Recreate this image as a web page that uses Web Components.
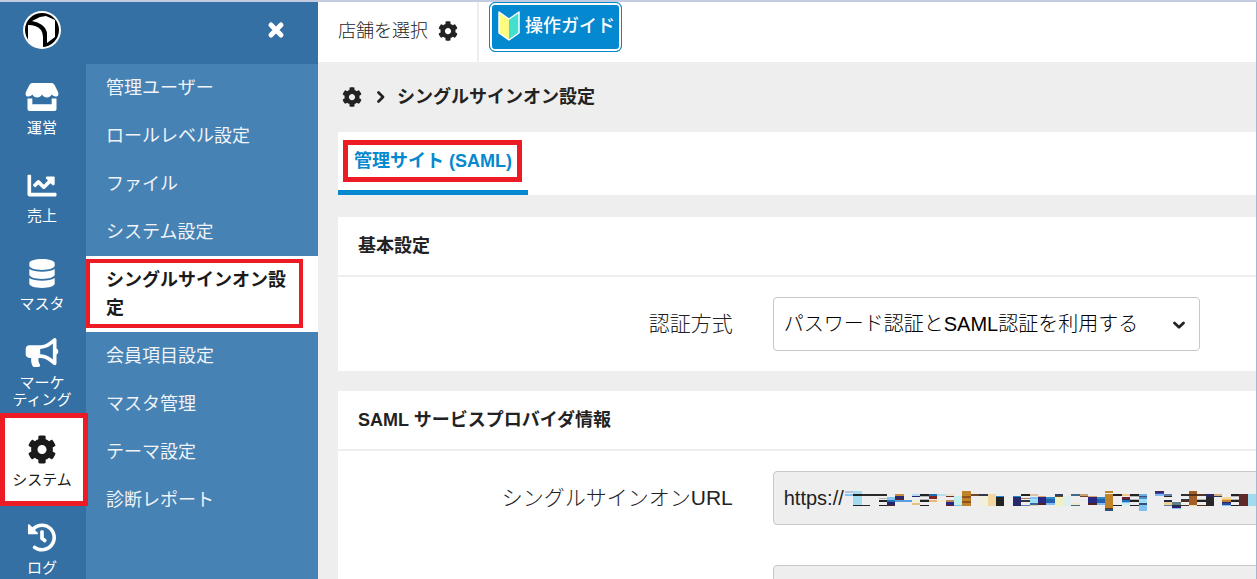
<!DOCTYPE html>
<html lang="ja">
<head>
<meta charset="utf-8">
<title>シングルサインオン設定</title>
<style>
  html, body {
    margin: 0;
    height: 100%;
    overflow: hidden;
  }
  body {
    font-family: "Liberation Sans", "Noto Sans CJK JP", sans-serif;
    font-size: 18px;
    line-height: 28px;
    color: #222;
    --blue: #0488cf;
    --red: #ed1c24;
    --grey: #eee;
  }
</style>
</head>
<body>
<admin-app>
  <side-bar slot="side">
    <rail-item slot="rail" icon="store" label="運営"></rail-item>
    <rail-item slot="rail" icon="chart" label="売上"></rail-item>
    <rail-item slot="rail" icon="database" label="マスタ"></rail-item>
    <rail-item slot="rail" icon="bullhorn" label="マーケ ティング"></rail-item>
    <rail-item slot="rail" icon="cog" label="システム" active></rail-item>
    <rail-item slot="rail" icon="history" label="ログ"></rail-item>

    <menu-item>管理ユーザー</menu-item>
    <menu-item>ロールレベル設定</menu-item>
    <menu-item>ファイル</menu-item>
    <menu-item>システム設定</menu-item>
    <menu-item active>シングルサインオン設定</menu-item>
    <menu-item>会員項目設定</menu-item>
    <menu-item>マスタ管理</menu-item>
    <menu-item>テーマ設定</menu-item>
    <menu-item>診断レポート</menu-item>
  </side-bar>

  <top-bar slot="top"></top-bar>
  <page-crumb>シングルサインオン設定</page-crumb>
  <tab-bar>管理サイト (SAML)</tab-bar>

  <setting-panel heading="基本設定">
    <select-field label="認証方式" value="パスワード認証とSAML認証を利用する"></select-field>
  </setting-panel>
  <setting-panel heading="SAML サービスプロバイダ情報">
    <text-field label="シングルサインオンURL" value="https://" masked></text-field>
    <text-field></text-field>
  </setting-panel>
</admin-app>

<script>
const icons = {
  store: ['0 0 34 30', '<path d="M7 0h20q2 0 3 2l3 6q1 2 1 3c0 2-1 3-3 3-2 0-3-1-4-2-1 2-3 3-5 3s-4-1-5-3c-1 2-3 3-5 3s-4-1-5-3c-1 1-2 2-4 2s-3-1-3-3q0-1 1-3l3-6q1-2 3-2z"/><path d="M2 16h5v6h20v-6h5v11q0 2-2 2H4q-2 0-2-2z"/>'],
  chart: ['0 0 512 512', '<path d="M496 384H64V80c0-8.84-7.16-16-16-16H16C7.16 64 0 71.16 0 80v336c0 17.67 14.33 32 32 32h464c8.84 0 16-7.16 16-16v-32c0-8.84-7.16-16-16-16zM464 96H345.94c-21.38 0-32.09 25.85-16.97 40.97l32.4 32.4L288 242.75l-73.37-73.37c-12.5-12.5-32.76-12.5-45.25 0l-68.69 68.69c-6.25 6.25-6.25 16.38 0 22.63l22.62 22.62c6.25 6.25 16.38 6.25 22.63 0L192 237.25l73.37 73.37c12.5 12.5 32.76 12.5 45.25 0l96-96 32.4 32.4c15.12 15.12 40.97 4.41 40.97-16.97V112c.01-8.84-7.15-16-15.99-16z"/>'],
  database: ['-32 0 512 512', '<path d="M448 73.143v45.714C448 159.143 347.667 192 224 192S0 159.143 0 118.857V73.143C0 32.857 100.333 0 224 0s224 32.857 224 73.143zM448 176v102.857C448 319.143 347.667 352 224 352S0 319.143 0 278.857V176c48.125 33.143 136.208 48.572 224 48.572S399.874 209.143 448 176zm0 160v102.857C448 479.143 347.667 512 224 512S0 479.143 0 438.857V336c48.125 33.143 136.208 48.572 224 48.572S399.874 369.143 448 336z"/>'],
  bullhorn: ['0 0 576 512', '<path d="M576 240c0-23.63-12.95-44.04-32-55.12V32.01C544 23.26 537.02 0 512 0c-7.12 0-14.19 2.38-19.98 7.02l-85.03 68.03C364.28 109.19 310.66 128 256 128H64c-35.35 0-64 28.65-64 64v96c0 35.35 28.65 64 64 64h33.7c-1.39 10.48-2.18 21.14-2.18 32 0 39.77 9.26 77.35 25.56 110.94 5.19 10.69 16.52 17.06 28.4 17.06h74.28c26.05 0 41.69-29.84 25.9-50.56-16.4-21.52-26.15-48.36-26.15-77.44 0-11.11 1.62-21.79 4.41-32H256c54.66 0 108.28 18.81 150.98 52.95l85.03 68.03a32.023 32.023 0 0 0 19.98 7.02c24.92 0 32-22.78 32-32V295.13C563.05 284.04 576 263.63 576 240zm-96 141.42l-33.05-26.44C392.95 311.78 325.12 288 256 288v-96c69.12 0 136.95-23.78 190.95-66.98L480 98.58v282.84z"/>'],
  cog: ['0 0 512 512', '<path d="M487.4 315.7l-42.6-24.6c4.3-23.2 4.3-47 0-70.2l42.6-24.6c4.9-2.8 7.1-8.6 5.5-14-11.1-35.6-30-67.8-54.7-94.6-3.8-4.1-10-5.1-14.8-2.3L380.8 110c-17.9-15.4-38.5-27.3-60.8-35.1V25.8c0-5.6-3.9-10.5-9.4-11.7-36.7-8.2-74.3-7.8-109.2 0-5.5 1.2-9.4 6.1-9.4 11.7V75c-22.2 7.9-42.8 19.8-60.8 35.1L88.7 85.5c-4.9-2.8-11-1.9-14.8 2.3-24.7 26.7-43.6 58.9-54.7 94.6-1.7 5.4.6 11.2 5.5 14L67.3 221c-4.3 23.2-4.3 47 0 70.2l-42.6 24.6c-4.9 2.8-7.1 8.6-5.5 14 11.1 35.6 30 67.8 54.7 94.6 3.8 4.1 10 5.1 14.8 2.3l42.6-24.6c17.9 15.4 38.5 27.3 60.8 35.1v49.2c0 5.6 3.9 10.5 9.4 11.7 36.7 8.2 74.3 7.8 109.2 0 5.5-1.2 9.4-6.1 9.4-11.7v-49.2c22.2-7.9 42.8-19.8 60.8-35.1l42.6 24.6c4.9 2.8 11 1.9 14.8-2.3 24.7-26.7 43.6-58.9 54.7-94.6 1.5-5.5-.7-11.3-5.6-14.1zM256 336c-44.1 0-80-35.9-80-80s35.9-80 80-80 80 35.9 80 80-35.9 80-80 80z"/>'],
  history: ['0 0 512 512', '<path d="M504 255.531c.253 136.64-111.18 248.372-247.82 248.468-59.015.042-113.223-20.53-155.822-54.911-11.077-8.94-11.905-25.541-1.839-35.607l11.267-11.267c8.609-8.609 22.353-9.551 31.891-1.984C173.062 425.135 212.781 440 256 440c101.705 0 184-82.311 184-184 0-101.705-82.311-184-184-184-48.814 0-93.149 18.969-126.068 49.932l50.754 50.754c10.08 10.08 2.941 27.314-11.313 27.314H24c-8.837 0-16-7.163-16-16V38.627c0-14.254 17.234-21.393 27.314-11.314l49.372 49.372C129.209 34.136 189.552 8 256 8c136.81 0 247.747 110.78 248 247.531zm-180.912 78.784l9.823-12.63c8.138-10.463 6.253-25.542-4.21-33.679L288 256.349V152c0-13.255-10.745-24-24-24h-16c-13.255 0-24 10.745-24 24v135.651l65.409 50.874c10.463 8.137 25.541 6.253 33.679-4.21z"/>'],
  close: ['0 0 20 20', '<path d="M5 5l10 10M15 5L5 15" fill="none" stroke="currentColor" stroke-width="5" stroke-linecap="round"/>'],
  right: ['0 0 16 16', '<path d="M5.500 3.500L10 8l-4.500 4.500" fill="none" stroke="currentColor" stroke-width="2.800" stroke-linecap="round" stroke-linejoin="round"/>'],
  down: ['0 0 16 16', '<path d="M3.500 6L8 10.200 12.500 6" fill="none" stroke="currentColor" stroke-width="2.800" stroke-linecap="round" stroke-linejoin="round"/>'],
  logo: ['0 0 38 38', '<circle cx="19" cy="19" r="19" fill="#fff"/><circle cx="19" cy="19" r="17" fill="#000"/><path d="M9 10l8-4 6-1 9 4v17l-8 6v-9q0-5-5-9-4-3-10-4z" fill="#fff"/><path d="M5 14q9 0 13 5 2 3 2 7v11q-8 0-12-4-3-2-3-5z" fill="#fff"/>'],
  guide: ['0 0 22 30', '<path d="M1 1l10 7v21L1 22z" fill="#fdfb80"/><path d="M21 1L11 8v21l10-7z" fill="#45dfd0"/><path d="M1 1l10 7L21 1v21l-10 7-10-7z" fill="none" stroke="#fff" stroke-width="1.500" stroke-linejoin="round"/>']
};

class AppIcon extends HTMLElement {
  constructor() {
    super();
    this.attachShadow({ mode: 'open' });
  }

  connectedCallback() {
    const [box, shape] = icons[this.getAttribute('name')];
    this.shadowRoot.innerHTML = `
      <style>
        :host { display: block; flex: none; width: 20px; height: 20px; }
        svg { display: block; width: 100%; height: 100%; fill: currentColor; }
      </style>
      <svg viewBox="${box}" aria-hidden="true">${shape}</svg>
    `;
  }
}

class AdminApp extends HTMLElement {
  constructor() {
    super();
    this.attachShadow({ mode: 'open' });
    this.shadowRoot.innerHTML = `
      <style>
        :host {
          display: grid;
          grid-template-columns: 318px 1fr;
          box-sizing: border-box;
          height: 100vh;
          border-top: 2px solid #c3cce0;
          background: var(--grey);
        }
        .page { min-width: 0; border-right: 1px solid #a9b6d0; overflow: hidden; }
        main { padding-left: 20px; }
      </style>
      <slot name="side"></slot>
      <div class="page">
        <slot name="top"></slot>
        <main><slot></slot></main>
      </div>
    `;
  }
}

class SideBar extends HTMLElement {
  constructor() {
    super();
    this.attachShadow({ mode: 'open' });
    this.shadowRoot.innerHTML = `
      <style>
        :host {
          display: grid;
          grid-template: 62px 1fr / 86px 1fr;
          min-height: 0;
          background: #3470a3;
          color: #fff;
        }
        header {
          grid-column: 1 / 3;
          display: flex;
          align-items: center;
          justify-content: space-between;
          padding: 0 32px 6px 23px;
        }
        .logo { width: 38px; height: 38px; }
        button {
          padding: 0;
          border: 0;
          background: none;
          color: inherit;
        }
        nav { min-height: 0; }
        .rail { padding-top: 1px; }
        .menu { background: #4682b4; }
      </style>
      <header>
        <app-icon class="logo" name="logo"></app-icon>
        <button aria-label="閉じる"><app-icon name="close"></app-icon></button>
      </header>
      <nav class="rail"><slot name="rail"></slot></nav>
      <nav class="menu"><slot></slot></nav>
    `;
  }
}

class RailItem extends HTMLElement {
  constructor() {
    super();
    this.attachShadow({ mode: 'open' });
  }

  connectedCallback() {
    const lines = this.getAttribute('label').split(' ');
    this.shadowRoot.innerHTML = `
      <style>
        :host { display: block; position: relative; }
        a {
          display: flex;
          flex-direction: column;
          align-items: center;
          justify-content: center;
          gap: 7px;
          height: 88px;
          padding-right: 2px;
          color: inherit;
          font-size: 15px;
          line-height: 17px;
          text-decoration: none;
          white-space: nowrap;
        }
        app-icon { width: 34px; height: 29px; }
        span { display: block; text-align: center; }
        :host([active]) a { background: #fff; color: #1a1a1a; }
        :host([active])::after {
          content: "";
          position: absolute;
          z-index: 1;
          inset: -4px -2px -1px 0;
          border: 5px solid var(--red);
          pointer-events: none;
        }
      </style>
      <a href="#">
        <app-icon name="${this.getAttribute('icon')}"></app-icon>
        <div>${lines.map((line) => `<span>${line}</span>`).join('')}</div>
      </a>
    `;
  }
}

class MenuItem extends HTMLElement {
  constructor() {
    super();
    this.attachShadow({ mode: 'open' });
    this.shadowRoot.innerHTML = `
      <style>
        :host { display: block; position: relative; }
        a {
          display: block;
          padding: 10px 20px;
          color: #f0f4f8;
          text-decoration: none;
        }
        :host([active]) a { background: #fff; color: #1a1a1a; font-weight: bold; }
        :host([active])::after {
          content: "";
          position: absolute;
          inset: 3px 15px 4px 0;
          border: 4px solid var(--red);
          pointer-events: none;
        }
      </style>
      <a href="#"><slot></slot></a>
    `;
  }
}

class TopBar extends HTMLElement {
  constructor() {
    super();
    this.attachShadow({ mode: 'open' });
    this.shadowRoot.innerHTML = `
      <style>
        :host { display: flex; height: 60px; background: #fff; }
        button { font: inherit; color: inherit; cursor: pointer; }
        .shop {
          display: flex;
          align-items: center;
          gap: 10px;
          padding: 0 19px 2px 20px;
          border: 0;
          border-right: 2px solid var(--grey);
          background: none;
          font-weight: 300;
        }
        .guide {
          display: flex;
          align-items: center;
          gap: 5px;
          height: 50px;
          margin-left: 10px;
          padding: 0 6px 2px 8px;
          border: 1px solid var(--blue);
          border-radius: 6px;
          background: var(--blue);
          box-shadow: inset 0 0 0 2px #fff;
          color: #fff;
          font-weight: 500;
        }
        .guide app-icon { width: 22px; height: 30px; }
      </style>
      <button class="shop">店舗を選択<app-icon name="cog"></app-icon></button>
      <button class="guide"><app-icon name="guide"></app-icon>操作ガイド</button>
    `;
  }
}

class PageCrumb extends HTMLElement {
  constructor() {
    super();
    this.attachShadow({ mode: 'open' });
    this.shadowRoot.innerHTML = `
      <style>
        :host {
          display: flex;
          align-items: center;
          height: 70px;
          padding-left: 4px;
          font-weight: bold;
        }
        a { color: inherit; }
        .arrow { width: 16px; height: 16px; margin: 0 8px 0 11px; }
      </style>
      <a href="#" aria-label="システム"><app-icon name="cog"></app-icon></a>
      <app-icon class="arrow" name="right"></app-icon>
      <slot></slot>
    `;
  }
}

class TabBar extends HTMLElement {
  constructor() {
    super();
    this.attachShadow({ mode: 'open' });
    this.shadowRoot.innerHTML = `
      <style>
        :host { display: flex; margin-bottom: 22px; background: #fff; }
        button {
          position: relative;
          height: 63px;
          padding: 0 16px;
          border: 0;
          border-bottom: 5px solid var(--blue);
          background: none;
          color: var(--blue);
          font: inherit;
          font-weight: bold;
        }
        button::after {
          content: "";
          position: absolute;
          inset: 8px 6px 8px 5px;
          border: 5px solid var(--red);
        }
      </style>
      <button><slot></slot></button>
    `;
  }
}

class SettingPanel extends HTMLElement {
  constructor() {
    super();
    this.attachShadow({ mode: 'open' });
  }

  connectedCallback() {
    this.shadowRoot.innerHTML = `
      <style>
        :host { display: block; margin-bottom: 20px; background: #fff; }
        h2 {
          margin: 0;
          padding: 15px 20px;
          border-bottom: 2px solid var(--grey);
          font-size: 18px;
        }
        .rows { display: grid; gap: 40px; padding: 20px 0; }
      </style>
      <h2>${this.getAttribute('heading')}</h2>
      <div class="rows"><slot></slot></div>
    `;
  }
}

// [x, width, then top, bottom, colour for each band]
const mask = [
  [0, 8, 0, 2, '#b8c2dc', 3, 5, '#84c4f4'],
  [8, 9, 0, 15, '#a2daf0', 3, 5, '#222', 14, 15, '#222'],
  [17, 25, 3, 5, '#2a2a28'], [17, 8, 14, 15, '#222838'],
  [34, 8, 7, 8, '#b4b4b4', 9, 11, '#222', 14, 15, '#222'],
  [42, 8, 6, 9, '#84c4f4', 9, 11, '#2070b4', 11, 14, '#24246c', 14, 15, '#602020'],
  [50, 9, 3, 5, '#c98a3c', 5, 8, '#28286c', 8, 9, '#702020', 9, 11, '#5aa0e0'],
  [59, 8, 9, 11, '#5aa0e0'],
  [67, 8, 3, 5, '#b4dcf4', 5, 6, '#28286c', 9, 11, '#f0f0d0', 12, 14, '#e8c080'],
  [75, 9, 3, 5, '#222', 5, 6, '#b4b4b4', 8, 9, '#b4b4b4', 9, 11, '#222', 14, 15, '#222'],
  [84, 8, 3, 5, '#206ab0', 5, 8, '#802820', 9, 11, '#efb470'],
  [92, 9, 3, 5, '#b0e0f0', 9, 11, '#f0f0d0'],
  [101, 8, 3, 5, '#f0e0d0', 5, 6, '#703020', 9, 11, '#c08850', 11, 14, '#28288a', 14, 15, '#702020'],
  [109, 8, 5, 14, '#c0f0f0', 14, 15, '#84c4f4'],
  [117, 9, 0, 15, '#c08428', 5, 7, '#905020', 10, 12, '#905020'],
  [126, 8, 3, 5, '#704828'],
  [134, 9, 3, 5, '#303850', 5, 15, '#f0f0dc'],
  [143, 8, 3, 15, '#f0d8a0'],
  [151, 8, 5, 6, '#2880d0', 6, 15, '#222'],
  [168, 8, 5, 6, '#2880d0', 6, 15, '#28286a'],
  [176, 9, 3, 5, '#222', 7, 8, '#a07860', 9, 11, '#303848', 14, 15, '#6080b0'],
  [185, 8, 3, 5, '#e0c0a0', 6, 8, '#84c4f4', 8, 12, '#a0dcf4', 12, 14, '#3068a8', 14, 15, '#e8c8a0'],
  [193, 8, 5, 6, '#d8a070', 6, 12, '#282880', 12, 14, '#502020'],
  [201, 9, 6, 8, '#3088c8', 8, 12, '#2460b0', 12, 14, '#84b8f4'],
  [210, 8, 3, 5, '#304058', 5, 6, '#704828', 6, 15, '#f0f0c0'],
  [218, 8, 5, 15, '#dceeee'],
  [226, 9, 3, 5, '#406888', 12, 14, '#f0e8c8', 14, 15, '#406888'],
  [235, 8, 3, 5, '#c8a070', 5, 6, '#704828'],
  [243, 9, 5, 6, '#d8a070', 6, 12, '#282880', 12, 14, '#502020'],
  [252, 8, 6, 8, '#3088c8', 8, 12, '#2460b0', 12, 14, '#84b8f4'],
  [260, 8, 0, 2, '#c08428', 3, 17, '#c08428', 17, 18, '#603820', 18, 20, '#305080'],
  [268, 9, 3, 5, '#222', 14, 15, '#222'],
  [277, 8, 3, 5, '#f0c88c', 6, 8, '#702030', 8, 9, '#28286c', 9, 11, '#2070b4', 11, 12, '#84c4f4', 12, 14, '#c8f0f0'],
  [285, 9, 3, 5, '#222', 5, 6, '#b4b4b4', 8, 9, '#b4b4b4', 9, 11, '#222', 14, 15, '#222'],
  [294, 8, 3, 5, '#70b0e0', 5, 6, '#405070', 6, 8, '#4890d0', 8, 12, '#a0dcf4', 12, 14, '#305080', 14, 20, '#80bff0'],
  [310, 9, 0, 2, '#402868', 2, 3, '#2850b0', 3, 5, '#84b8f4'],
  [319, 8, 3, 5, '#6080b0', 5, 6, '#222', 9, 11, '#202840', 11, 14, '#f0d090', 14, 15, '#6080b0'],
  [327, 9, 11, 14, '#608088', 14, 15, '#203830', 15, 17, '#302070', 17, 18, '#84c4f4'],
  [336, 8, 3, 5, '#303030', 8, 9, '#303850', 9, 11, '#503020', 14, 15, '#503020'],
  [344, 8, 0, 14, '#a06028', 3, 5, '#503018', 14, 15, '#f0d8a0'],
  [352, 9, 3, 5, '#503828', 8, 9, '#b4b4b4', 9, 11, '#222', 14, 15, '#503020'],
  [361, 8, 3, 6, '#282868', 6, 15, '#282828'],
  [369, 8, 3, 5, '#d8b080', 5, 6, '#303850'],
  [377, 9, 6, 8, '#f0d8a0', 8, 9, '#f0c060', 9, 11, '#c08030', 11, 12, '#28286c', 12, 14, '#2848a0', 14, 15, '#84c4f4'],
  [386, 8, 3, 5, '#222', 5, 6, '#b4b4b4', 8, 9, '#b4b4b4', 9, 11, '#222', 14, 15, '#222'],
  [394, 9, 3, 15, '#602828'],
  [403, 8, 3, 15, '#a0dcf0']
];

function maskSvg() {
  let rects = '';
  mask.forEach(([x, w, ...bands]) => {
    for (let i = 0; i < bands.length; i += 3) {
      rects += `<rect x="${x}" y="${bands[i]}" width="${w}" height="${bands[i + 1] - bands[i]}" fill="${bands[i + 2]}"/>`;
    }
  });
  return `<svg width="411" height="20" shape-rendering="crispEdges" aria-hidden="true">${rects}</svg>`;
}

const fieldStyle = `
  :host {
    display: grid;
    grid-template-columns: 43% 1fr;
    column-gap: 40px;
    align-items: center;
  }
  label {
    font-size: 21px;
    font-weight: 300;
    text-align: right;
    white-space: nowrap;
  }
  .control { position: relative; min-width: 0; }
  select, input {
    display: block;
    box-sizing: border-box;
    width: 100%;
    height: 54px;
    margin: 0;
    padding: 0 10px;
    border: 1px solid #c8c8c8;
    border-radius: 4px;
    font: inherit;
    font-size: 20px;
    font-weight: 300;
  }
`;

class SelectField extends HTMLElement {
  constructor() {
    super();
    this.attachShadow({ mode: 'open' });
  }

  connectedCallback() {
    this.shadowRoot.innerHTML = `
      <style>
        ${fieldStyle}
        .control { max-width: 427px; }
        select { appearance: none; background: #fff; color: #000; }
        app-icon {
          position: absolute;
          top: 20px;
          right: 13px;
          width: 16px;
          height: 16px;
          pointer-events: none;
        }
      </style>
      <label for="field">${this.getAttribute('label')}</label>
      <div class="control">
        <select id="field"><option>${this.getAttribute('value')}</option></select>
        <app-icon name="down"></app-icon>
      </div>
    `;
  }
}

class TextField extends HTMLElement {
  constructor() {
    super();
    this.attachShadow({ mode: 'open' });
  }

  connectedCallback() {
    this.shadowRoot.innerHTML = `
      <style>
        ${fieldStyle}
        .control { margin-right: -20px; }
        input { background: var(--grey); color: #222; }
        svg { position: absolute; top: 20px; left: 72px; }
      </style>
      <label for="field">${this.getAttribute('label') || ''}</label>
      <div class="control">
        <input id="field" type="text" readonly value="${this.getAttribute('value') || ''}">
        ${this.hasAttribute('masked') ? maskSvg() : ''}
      </div>
    `;
  }
}

customElements.define('app-icon', AppIcon);
customElements.define('admin-app', AdminApp);
customElements.define('side-bar', SideBar);
customElements.define('rail-item', RailItem);
customElements.define('menu-item', MenuItem);
customElements.define('top-bar', TopBar);
customElements.define('page-crumb', PageCrumb);
customElements.define('tab-bar', TabBar);
customElements.define('setting-panel', SettingPanel);
customElements.define('select-field', SelectField);
customElements.define('text-field', TextField);
</script>
</body>
</html>
